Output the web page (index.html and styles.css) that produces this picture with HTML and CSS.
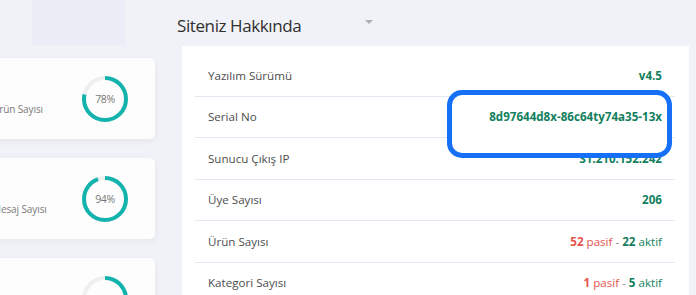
FILE: index.html
```html
<!DOCTYPE html>
<html lang="tr">
  <head>
    <meta charset="UTF-8" />
    <meta name="viewport" content="width=device-width, initial-scale=1.0" />
    <title>Siteniz Hakkında</title>
    <link rel="stylesheet" href="styles.css">
  </head>
  <body>
    <div class="left-col">
      <div class="top-block"></div>

      <div class="stat-card">
        <div class="stat-text">Ürün Sayısı</div>
        <div class="ring">
          <svg width="46" height="46" viewBox="0 0 46 46">
            <circle cx="23" cy="23" r="21" class="ring-track" />
            <circle cx="23" cy="23" r="21" class="ring-bar" stroke-dasharray="102.9 131.9" />
          </svg>
          <span>78%</span>
        </div>
      </div>

      <div class="stat-card">
        <div class="stat-text">Mesaj Sayısı</div>
        <div class="ring">
          <svg width="46" height="46" viewBox="0 0 46 46">
            <circle cx="23" cy="23" r="21" class="ring-track" />
            <circle cx="23" cy="23" r="21" class="ring-bar" stroke-dasharray="124 131.9" />
          </svg>
          <span>94%</span>
        </div>
      </div>

      <div class="stat-card">
        <div class="stat-text"></div>
        <div class="ring">
          <svg width="46" height="46" viewBox="0 0 46 46">
            <circle cx="23" cy="23" r="21" class="ring-track" />
            <circle cx="23" cy="23" r="21" class="ring-bar" stroke-dasharray="87 131.9" />
          </svg>
        </div>
      </div>
    </div>

    <div class="right-col">
      <div class="section-head">
        <h2>Siteniz Hakkında</h2>
        <span class="caret"></span>
      </div>

      <div class="info-panel">
        <div class="info-row">
          <span class="label">Yazılım Sürümü</span>
          <span class="value green">v4.5</span>
        </div>
        <div class="info-row">
          <span class="label">Serial No</span>
          <span class="value green">8d97644d8x-86c64ty74a35-13x</span>
        </div>
        <div class="info-row">
          <span class="label">Sunucu Çıkış IP</span>
          <span class="value green">31.210.152.242</span>
        </div>
        <div class="info-row">
          <span class="label">Üye Sayısı</span>
          <span class="value green">206</span>
        </div>
        <div class="info-row">
          <span class="label">Ürün Sayısı</span>
          <span class="value"><b class="red">52</b> <span class="red">pasif</span> - <b class="green">22</b> <span class="green">aktif</span></span>
        </div>
        <div class="info-row">
          <span class="label">Kategori Sayısı</span>
          <span class="value"><b class="red">1</b> <span class="red">pasif</span> - <b class="green">5</b> <span class="green">aktif</span></span>
        </div>

        <div class="highlight"></div>
      </div>
    </div>
  </body>
</html>
```

FILE: styles.css
```css
:root {
  --bg: #f1f2f7;
  --teal: #13b3ad;
  --green: #137f5e;
  --red: #e5544c;
  --line: #e3e9f2;
  --text: #4a4a4a;
}

* {
  margin: 0;
  padding: 0;
  box-sizing: border-box;
}

body {
  font-family: "Open Sans", "Noto Sans", sans-serif;
  background-color: var(--bg);
  color: var(--text);
  display: flex;
  width: 696px;
  height: 295px;
  overflow: hidden;
}

/* left column, cut off by the viewport */
.left-col {
  width: 200px;
  margin-left: -45px;
  flex-shrink: 0;
}

.top-block {
  width: 93px;
  height: 45px;
  margin-left: 77px;
  margin-bottom: 13px;
  background-color: #eaedf6;
}

.stat-card {
  height: 81px;
  margin-bottom: 19px;
  background-color: #fdfdfd;
  border-radius: 5px;
  box-shadow: 0 2px 6px rgba(40, 50, 90, 0.06);
  display: flex;
  align-items: center;
  justify-content: space-between;
  padding: 0 27px 0 37px;
}

.stat-text {
  font-size: 10px;
  color: #7a7a7a;
  margin-top: 20px;
  letter-spacing: -0.1px;
}

.ring {
  position: relative;
  width: 46px;
  height: 46px;
  display: flex;
  align-items: center;
  justify-content: center;
}

.ring svg {
  position: absolute;
  top: 0;
  left: 0;
  transform: rotate(-90deg);
}

.ring-track {
  fill: none;
  stroke: #efefef;
  stroke-width: 4;
}

.ring-bar {
  fill: none;
  stroke: var(--teal);
  stroke-width: 4;
}

.ring span {
  font-size: 10.5px;
  color: #777;
  letter-spacing: -0.4px;
}

/* right column */
.right-col {
  flex: 1;
  padding-left: 27px;
  padding-right: 7px;
}

.section-head {
  height: 46px;
  display: flex;
  align-items: center;
  margin-left: -5px;
  padding-top: 4px;
}

.section-head h2 {
  font-size: 17px;
  font-weight: 400;
  color: #2f2f2f;
  letter-spacing: -0.4px;
}

.caret {
  margin-left: 64px;
  margin-top: -7px;
  width: 0;
  height: 0;
  border-left: 4px solid transparent;
  border-right: 4px solid transparent;
  border-top: 4px solid #b0b0b0;
}

.info-panel {
  position: relative;
  background-color: #fff;
  height: 260px;
  padding: 9px 14px 0 13px;
}

.info-row {
  height: 41.5px;
  display: flex;
  align-items: center;
  justify-content: space-between;
  padding: 0 13px;
  border-bottom: 1px solid var(--line);
  font-size: 11.6px;
}

.label {
  color: #4d4d4d;
}

.value {
  color: #888;
}

.value.green,
b.green {
  font-weight: 700;
}

.green {
  color: var(--green);
}

.red {
  color: var(--red);
}

b {
  font-weight: 700;
}

/* annotation box around the serial number */
.highlight {
  position: absolute;
  left: 265px;
  top: 43.5px;
  width: 225px;
  height: 68.5px;
  border: 5px solid #1570f5;
  border-radius: 15px;
  background-color: #fff;
  z-index: 1;
}

.info-row:nth-child(2) .value {
  position: relative;
  z-index: 2;
}
```
